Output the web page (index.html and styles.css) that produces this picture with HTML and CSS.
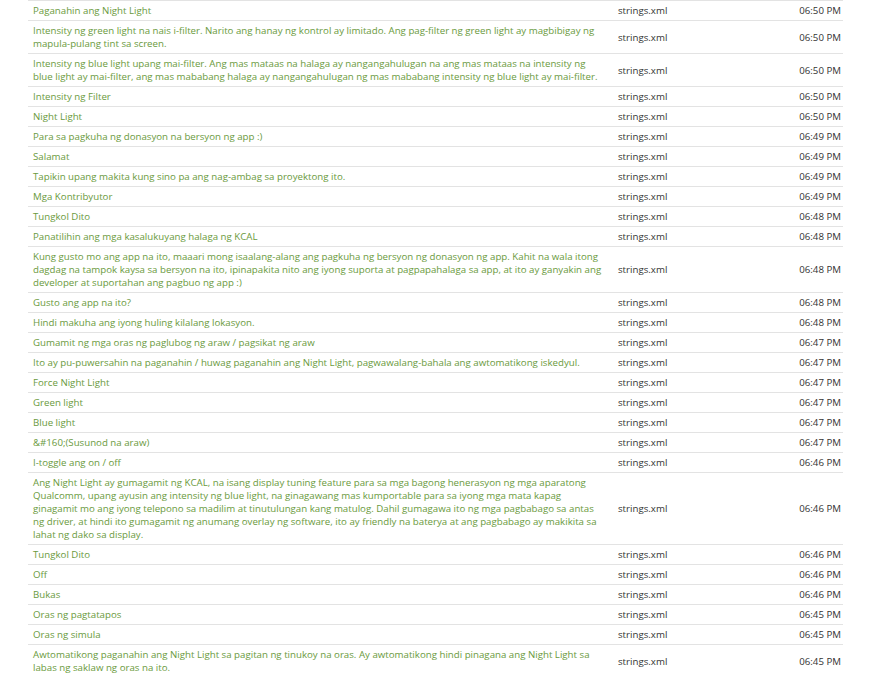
FILE: index.html
```html
<!DOCTYPE html>
<html lang="tl">

<head>
    <meta charset="UTF-8">
    <title>Mga string</title>
    <link rel="stylesheet" href="styles.css">
</head>

<body>
    <table class="strings">
        <tr><td class="src">Paganahin ang Night Light</td><td class="file">strings.xml</td><td class="time">06:50 PM</td></tr>
        <tr><td class="src">Intensity ng green light na nais i-filter. Narito ang hanay ng kontrol ay limitado. Ang pag-filter ng green light ay magbibigay ng mapula-pulang tint sa screen.</td><td class="file">strings.xml</td><td class="time">06:50 PM</td></tr>
        <tr><td class="src">Intensity ng blue light upang mai-filter. Ang mas mataas na halaga ay nangangahulugan na ang mas mataas na intensity ng blue light ay mai-filter, ang mas mababang halaga ay nangangahulugan ng mas mababang intensity ng blue light ay mai-filter.</td><td class="file">strings.xml</td><td class="time">06:50 PM</td></tr>
        <tr><td class="src">Intensity ng Filter</td><td class="file">strings.xml</td><td class="time">06:50 PM</td></tr>
        <tr><td class="src">Night Light</td><td class="file">strings.xml</td><td class="time">06:50 PM</td></tr>
        <tr><td class="src">Para sa pagkuha ng donasyon na bersyon ng app :)</td><td class="file">strings.xml</td><td class="time">06:49 PM</td></tr>
        <tr><td class="src">Salamat</td><td class="file">strings.xml</td><td class="time">06:49 PM</td></tr>
        <tr><td class="src">Tapikin upang makita kung sino pa ang nag-ambag sa proyektong ito.</td><td class="file">strings.xml</td><td class="time">06:49 PM</td></tr>
        <tr><td class="src">Mga Kontribyutor</td><td class="file">strings.xml</td><td class="time">06:49 PM</td></tr>
        <tr><td class="src">Tungkol Dito</td><td class="file">strings.xml</td><td class="time">06:48 PM</td></tr>
        <tr><td class="src">Panatilihin ang mga kasalukuyang halaga ng KCAL</td><td class="file">strings.xml</td><td class="time">06:48 PM</td></tr>
        <tr><td class="src">Kung gusto mo ang app na ito, maaari mong isaalang-alang ang pagkuha ng bersyon ng donasyon ng app. Kahit na wala itong dagdag na tampok kaysa sa bersyon na ito, ipinapakita nito ang iyong suporta at pagpapahalaga sa app, at ito ay ganyakin ang developer at suportahan ang pagbuo ng app :)</td><td class="file">strings.xml</td><td class="time">06:48 PM</td></tr>
        <tr><td class="src">Gusto ang app na ito?</td><td class="file">strings.xml</td><td class="time">06:48 PM</td></tr>
        <tr><td class="src">Hindi makuha ang iyong huling kilalang lokasyon.</td><td class="file">strings.xml</td><td class="time">06:48 PM</td></tr>
        <tr><td class="src">Gumamit ng mga oras ng paglubog ng araw / pagsikat ng araw</td><td class="file">strings.xml</td><td class="time">06:47 PM</td></tr>
        <tr><td class="src">Ito ay pu-puwersahin na paganahin / huwag paganahin ang Night Light, pagwawalang-bahala ang awtomatikong iskedyul.</td><td class="file">strings.xml</td><td class="time">06:47 PM</td></tr>
        <tr><td class="src">Force Night Light</td><td class="file">strings.xml</td><td class="time">06:47 PM</td></tr>
        <tr><td class="src">Green light</td><td class="file">strings.xml</td><td class="time">06:47 PM</td></tr>
        <tr><td class="src">Blue light</td><td class="file">strings.xml</td><td class="time">06:47 PM</td></tr>
        <tr><td class="src">&amp;#160;(Susunod na araw)</td><td class="file">strings.xml</td><td class="time">06:47 PM</td></tr>
        <tr><td class="src">I-toggle ang on / off</td><td class="file">strings.xml</td><td class="time">06:46 PM</td></tr>
        <tr><td class="src">Ang Night Light ay gumagamit ng KCAL, na isang display tuning feature para sa mga bagong henerasyon ng mga aparatong Qualcomm, upang ayusin ang intensity ng blue light, na ginagawang mas kumportable para sa iyong mga mata kapag ginagamit mo ang iyong telepono sa madilim at tinutulungan kang matulog. Dahil gumagawa ito ng mga pagbabago sa antas ng driver, at hindi ito gumagamit ng anumang overlay ng software, ito ay friendly na baterya at ang pagbabago ay makikita sa lahat ng dako sa display.</td><td class="file">strings.xml</td><td class="time">06:46 PM</td></tr>
        <tr><td class="src">Tungkol Dito</td><td class="file">strings.xml</td><td class="time">06:46 PM</td></tr>
        <tr><td class="src">Off</td><td class="file">strings.xml</td><td class="time">06:46 PM</td></tr>
        <tr><td class="src">Bukas</td><td class="file">strings.xml</td><td class="time">06:46 PM</td></tr>
        <tr><td class="src">Oras ng pagtatapos</td><td class="file">strings.xml</td><td class="time">06:45 PM</td></tr>
        <tr><td class="src">Oras ng simula</td><td class="file">strings.xml</td><td class="time">06:45 PM</td></tr>
        <tr><td class="src">Awtomatikong paganahin ang Night Light sa pagitan ng tinukoy na oras. Ay awtomatikong hindi pinagana ang Night Light sa labas ng saklaw ng oras na ito.</td><td class="file">strings.xml</td><td class="time">06:45 PM</td></tr>
    </table>
</body>

</html>
```

FILE: styles.css
```css
* {
    margin: 0;
    padding: 0;
}

body {
    background: #fff;
    font-family: "Open Sans", "Liberation Sans", sans-serif;
    font-size: 9.7px;
    line-height: 13px;
    color: #333;
}

.strings {
    width: 815px;
    margin-left: 28px;
    border-collapse: collapse;
    table-layout: fixed;
    border-top: 1px solid #e3e3e3;
}

.strings td {
    padding: 3px 5px;
    border-bottom: 1px solid #e3e3e3;
    vertical-align: middle;
}

.src {
    width: 571px;
    padding-right: 9px !important;
    color: #6a9a3d;
}

.file {
    width: 160px;
}

.time {
    text-align: right;
    padding-right: 2px !important;
}
```
